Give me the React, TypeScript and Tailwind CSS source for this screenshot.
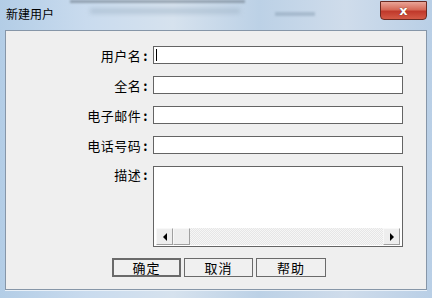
import React from "react";

const font = { fontFamily: '"Noto Sans CJK SC", "Liberation Sans", sans-serif' };

function Label({ text }: { text: string }) {
  return (
    <span className="tracking-[0.5px]">
      {text}
      <span className="ml-[2px] font-bold">:</span>
    </span>
  );
}

function Field({ label, cursor }: { label: string; cursor?: boolean }) {
  return (
    <>
      <div className="flex h-[18px] items-center justify-end text-[13px] leading-none text-black">
        <Label text={label} />
      </div>
      <div className="relative h-[18px] border border-[#646464] bg-white">
        {cursor && <div className="absolute left-[2px] top-[2px] h-[12px] w-px bg-black" />}
      </div>
    </>
  );
}

function ArrowBox({ dir }: { dir: "left" | "right" }) {
  return (
    <div className="flex h-[17px] w-[17px] items-center justify-center border border-t-[#f8f8f8] border-l-[#f8f8f8] border-r-[#a0a0a0] border-b-[#a0a0a0] bg-[#eeeeee]">
      <svg width="6" height="8" viewBox="0 0 6 8">
        {dir === "left" ? <path d="M5 0 L1 4 L5 8 Z" fill="#000" /> : <path d="M1 0 L5 4 L1 8 Z" fill="#000" />}
      </svg>
    </div>
  );
}

function Btn({ label, w, def }: { label: string; w: string; def?: boolean }) {
  return (
    <div
      className={`flex h-[19px] ${w} items-center justify-center bg-[#f0f0f0] text-[13px] leading-none tracking-[1px] text-black ${
        def ? "border-2 border-[#6a6a6a]" : "border border-[#6a6a6a]"
      }`}
    >
      {label}
    </div>
  );
}

export default function App() {
  return (
    <div
      style={font}
      className="flex h-[298px] w-[432px] flex-col overflow-hidden bg-[linear-gradient(90deg,#b3cde6_0%,#c9dbee_20%,#d6e2ee_40%,#bcd1e6_60%,#cfdceb_80%,#b9cfe6_100%)]"
    >
      {/* title bar */}
      <div className="relative flex h-[30px] shrink-0 items-start">
        <div className="pl-[6px] pt-[8px] text-[12px] leading-none text-black">新建用户</div>
        <div className="absolute left-[70px] top-0 h-[3px] w-[175px] bg-[#6c7a88] opacity-60 blur-[1px]" />
        <div className="absolute left-[90px] top-[8px] h-[6px] w-[150px] bg-[#9fb3c6] opacity-50 blur-[2px]" />
        <div className="absolute left-[275px] top-[12px] h-[4px] w-[40px] bg-[#8a9fb4] opacity-50 blur-[1px]" />
        <div className="ml-auto mr-[5px] mt-[1px] flex h-[19px] w-[47px] items-center justify-center rounded-b-[4px] border border-[#6b2a22] bg-[linear-gradient(180deg,#e9a598_0%,#d66a58_45%,#c0392b_55%,#d45a46_100%)]">
          <span className="text-[13px] font-bold leading-none text-white [text-shadow:0_0_1px_#3a1410]" style={{ fontFamily: '"DejaVu Sans", sans-serif' }}>
            x
          </span>
        </div>
      </div>

      {/* client area */}
      <div className="mx-[5px] mb-[8px] flex flex-1 flex-col border border-[#8696a8] bg-[#efefef] shadow-[0_1px_0_#e8f0f8]">
        <div className="grid grid-cols-[142px_250px] gap-x-[5px] gap-y-[12px] pt-[15px]">
          <Field label="用户名" cursor />
          <Field label="全名" />
          <Field label="电子邮件" />
          <Field label="电话号码" />
          <div className="flex justify-end pt-[2px] text-[13px] leading-none text-black">
            <Label text="描述" />
          </div>
          <div className="flex h-[81px] flex-col border border-[#646464] bg-white">
            <div className="flex-1" />
            <div className="mx-[2px] mb-[1px] flex h-[17px] bg-[repeating-conic-gradient(#e6e6e6_0%_25%,#f6f6f6_0%_50%)] bg-[length:2px_2px]">
              <ArrowBox dir="left" />
              <div className="h-[17px] w-[17px] border border-t-[#f8f8f8] border-l-[#f8f8f8] border-r-[#a0a0a0] border-b-[#a0a0a0] bg-[#eeeeee]" />
              <div className="flex-1" />
              <ArrowBox dir="right" />
            </div>
          </div>
        </div>
        <div className="ml-[106px] mt-[11px] flex gap-[3px]">
          <Btn label="确定" w="w-[69px]" def />
          <Btn label="取消" w="w-[69px]" />
          <Btn label="帮助" w="w-[70px]" />
        </div>
      </div>
    </div>
  );
}
